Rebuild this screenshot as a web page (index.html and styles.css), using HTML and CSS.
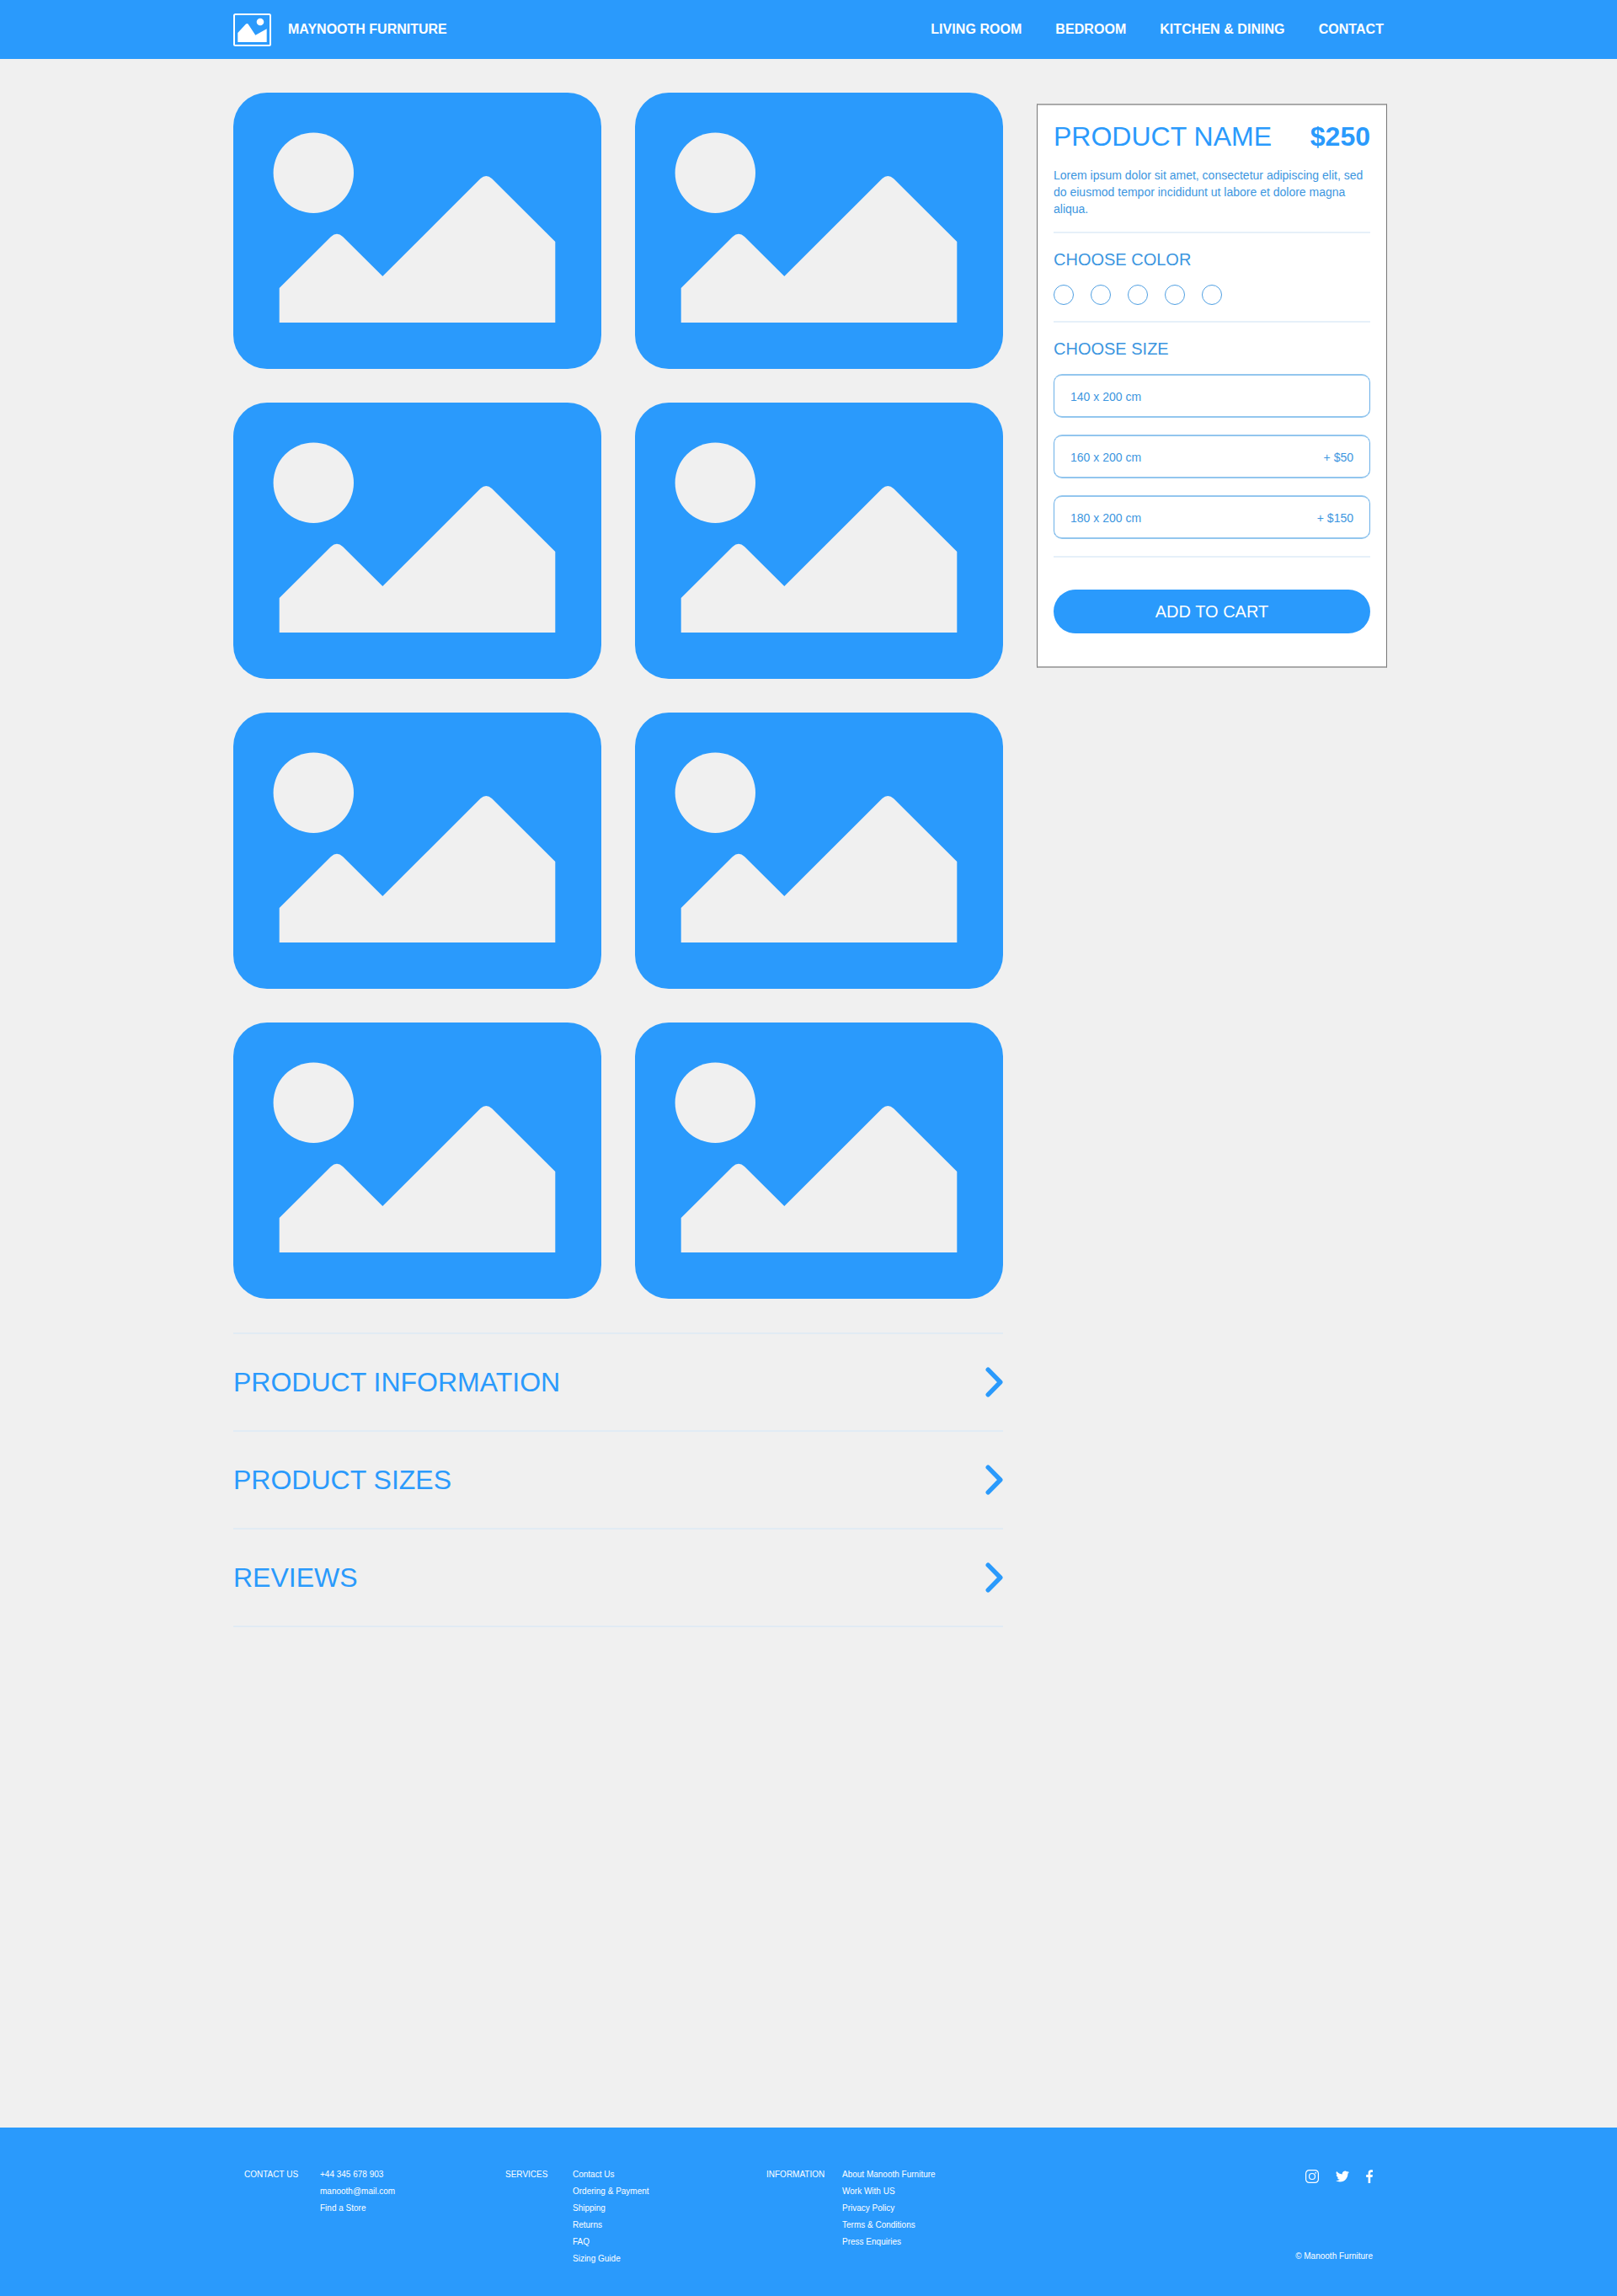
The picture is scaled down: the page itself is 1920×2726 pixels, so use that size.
FILE: index.html
```html
<!DOCTYPE html>
<html lang="en">
<head>
  <meta charset="UTF-8" />
  <title>Maynooth Furniture</title>
  <link rel="stylesheet" href="styles.css">
</head>
<body>

<svg class="sprites" width="0" height="0">
  <symbol id="placeholder" viewBox="0 0 437 328">
    <circle cx="95.3" cy="95.3" r="47.7" />
    <path d="M54.7 232 L116 171 Q123 164.500 130 171 L177.3 218 L293.500 102 Q300.3 96 307 102 L382.3 177 V273 H54.7 Z" />
  </symbol>
  <symbol id="chevron" viewBox="0 0 21 36">
    <path d="M3.2 3.2 L17.8 18 L3.2 32.800" fill="none" stroke="currentColor" stroke-width="5.400" stroke-linecap="round" stroke-linejoin="round" />
  </symbol>
</svg>

<!-- Top bar -->
<header class="topbar">
  <div class="topbar-inner">
    <a class="brand" href="#">
      <svg class="brand-logo" viewBox="0 0 45 39">
        <rect x="1" y="1" width="43" height="37" rx="1.5" fill="none" stroke="#fff" stroke-width="2" />
        <circle cx="32" cy="10" r="4.3" fill="#fff" />
        <path d="M5.3 23 L15 12.600 Q16.3 11.300 17.600 12.600 L26.3 25.700 L39.700 18.300 V34 H5.300 Z" fill="#fff" />
      </svg>
      <span>MAYNOOTH FURNITURE</span>
    </a>
    <nav class="main-nav">
      <a href="#">LIVING ROOM</a>
      <a href="#">BEDROOM</a>
      <a href="#">KITCHEN &amp; DINING</a>
      <a href="#">CONTACT</a>
    </nav>
  </div>
</header>

<main class="product-page">
  <div class="product-left">
    <!-- Gallery -->
    <div class="gallery">
      <div class="gallery-item"><svg><use href="#placeholder" /></svg></div>
      <div class="gallery-item"><svg><use href="#placeholder" /></svg></div>
      <div class="gallery-item"><svg><use href="#placeholder" /></svg></div>
      <div class="gallery-item"><svg><use href="#placeholder" /></svg></div>
      <div class="gallery-item"><svg><use href="#placeholder" /></svg></div>
      <div class="gallery-item"><svg><use href="#placeholder" /></svg></div>
      <div class="gallery-item"><svg><use href="#placeholder" /></svg></div>
      <div class="gallery-item"><svg><use href="#placeholder" /></svg></div>
    </div>

    <!-- Accordion -->
    <div class="details">
      <div class="details-row">
        <span>PRODUCT INFORMATION</span>
        <svg class="chevron"><use href="#chevron" /></svg>
      </div>
      <div class="details-row">
        <span>PRODUCT SIZES</span>
        <svg class="chevron"><use href="#chevron" /></svg>
      </div>
      <div class="details-row">
        <span>REVIEWS</span>
        <svg class="chevron"><use href="#chevron" /></svg>
      </div>
    </div>
  </div>

  <!-- Purchase panel -->
  <aside class="buy-panel">
    <div class="buy-head">
      <h1>PRODUCT NAME</h1>
      <div class="price">$250</div>
    </div>
    <p class="buy-text">Lorem ipsum dolor sit amet, consectetur adipiscing elit, sed do eiusmod tempor incididunt ut labore et dolore magna aliqua.</p>

    <div class="buy-section">
      <h2>CHOOSE COLOR</h2>
      <div class="swatches">
        <span class="swatch"></span>
        <span class="swatch"></span>
        <span class="swatch"></span>
        <span class="swatch"></span>
        <span class="swatch"></span>
      </div>
    </div>

    <div class="buy-section">
      <h2>CHOOSE SIZE</h2>
      <div class="size-list">
        <div class="size-option"><span>140 x 200 cm</span></div>
        <div class="size-option"><span>160 x 200 cm</span><span>+ $50</span></div>
        <div class="size-option"><span>180 x 200 cm</span><span>+ $150</span></div>
      </div>
    </div>

    <div class="buy-actions">
      <button class="add-to-cart">ADD TO CART</button>
    </div>
  </aside>
</main>

<footer class="footer">
  <div class="footer-inner">
    <div class="footer-col contact-col">
      <div class="footer-title">CONTACT US</div>
      <ul>
        <li>+44 345 678 903</li>
        <li>manooth@mail.com</li>
        <li>Find a Store</li>
      </ul>
    </div>
    <div class="footer-col services-col">
      <div class="footer-title">SERVICES</div>
      <ul>
        <li>Contact Us</li>
        <li>Ordering &amp; Payment</li>
        <li>Shipping</li>
        <li>Returns</li>
        <li>FAQ</li>
        <li>Sizing Guide</li>
      </ul>
    </div>
    <div class="footer-col info-col">
      <div class="footer-title">INFORMATION</div>
      <ul>
        <li>About Manooth Furniture</li>
        <li>Work With US</li>
        <li>Privacy Policy</li>
        <li>Terms &amp; Conditions</li>
        <li>Press Enquiries</li>
      </ul>
    </div>
    <div class="footer-side">
      <div class="social">
        <svg class="social-insta" viewBox="0 0 16 16">
          <rect x="0.6" y="0.6" width="14.8" height="14.8" rx="4" fill="none" stroke="#fff" stroke-width="1.2" />
          <circle cx="8" cy="8" r="3.5" fill="none" stroke="#fff" stroke-width="1.2" />
          <circle cx="12.2" cy="3.8" r="0.9" fill="#fff" />
        </svg>
        <svg class="social-twitter" viewBox="0 0 24 24">
          <path fill="#fff" d="M23.95 4.57a10 10 0 0 1-2.83.78 4.96 4.96 0 0 0 2.17-2.72 9.9 9.9 0 0 1-3.13 1.19 4.92 4.92 0 0 0-8.39 4.48C7.69 8.1 4.07 6.13 1.64 3.16a4.93 4.93 0 0 0 1.52 6.57 4.9 4.9 0 0 1-2.23-.62v.06a4.92 4.92 0 0 0 3.95 4.83 5 5 0 0 1-2.21.08 4.94 4.94 0 0 0 4.6 3.42A9.87 9.87 0 0 1 0 19.54a13.94 13.94 0 0 0 7.55 2.21c9.05 0 14-7.5 14-13.98q0-.32-.02-.63a9.94 9.94 0 0 0 2.46-2.55z" />
        </svg>
        <svg class="social-facebook" viewBox="0 0 8 16">
          <path fill="#fff" d="M5.2 16V8.9h2.3l.4-2.8H5.2V4.4c0-.8.2-1.4 1.4-1.4H8V.5C7.7.4 6.9.3 6 .3 4 .3 2.6 1.5 2.6 3.9v2.2H.2v2.8h2.4V16z" />
        </svg>
      </div>
      <div class="copyright">© Manooth Furniture</div>
    </div>
  </div>
</footer>

</body>
</html>
```

FILE: styles.css
```css
* {
  box-sizing: border-box;
}

body {
  font-family: "Liberation Sans", Arial, sans-serif;
  background: #f0f0f0;
  margin: 0;
  color: #2a9afc;
  display: flex;
  flex-direction: column;
  min-height: 2726px;
}

a {
  color: inherit;
  text-decoration: none;
}

.sprites {
  display: block;
  height: 0;
}

/* Top bar */
.topbar {
  background: #2a9afc;
  height: 70px;
  color: #fff;
}

.topbar-inner {
  width: 1366px;
  height: 100%;
  margin: 0 auto;
  display: flex;
  justify-content: space-between;
  align-items: center;
}

.brand {
  display: flex;
  align-items: center;
  gap: 20px;
  font-size: 16px;
  font-weight: bold;
}

.brand-logo {
  width: 45px;
  height: 39px;
  display: block;
}

.main-nav {
  display: flex;
  gap: 40px;
  font-size: 16px;
  font-weight: bold;
  letter-spacing: 0.05px;
}

/* Main layout */
.product-page {
  width: 1366px;
  margin: 0 auto;
  padding: 40px 0 0;
  display: grid;
  grid-template-columns: 914px 416px;
  gap: 40px;
  align-items: start;
  flex: 1;
}

.gallery {
  display: grid;
  grid-template-columns: 437px 437px;
  gap: 40px;
}

.gallery-item {
  height: 328px;
  background: #2a9afc;
  border-radius: 40px;
  fill: #f0f0f0;
}

.gallery-item svg {
  display: block;
  width: 100%;
  height: 100%;
}

/* Accordion */
.details {
  margin-top: 40px;
  border-top: 2px solid #e1ebf4;
}

.details-row {
  height: 116px;
  border-bottom: 2px solid #e1ebf4;
  display: flex;
  justify-content: space-between;
  align-items: center;
  font-size: 32px;
}

.chevron {
  width: 21px;
  height: 36px;
  display: block;
}

/* Purchase panel */
.buy-panel {
  margin-top: 13px;
  height: 670px;
  background: #fff;
  border: 1px solid #777;
  border-top: 2px solid #aaa;
  border-bottom: 2px solid #aaa;
  padding: 17px 19px 0;
}

.buy-head {
  display: flex;
  justify-content: space-between;
  align-items: center;
  height: 41px;
}

.buy-head h1 {
  margin: 0;
  font-size: 32px;
  font-weight: normal;
}

.price {
  font-size: 32px;
  font-weight: bold;
}

.buy-text {
  margin: 15px 0 0;
  font-size: 14px;
  line-height: 20px;
  color: #3c96e0;
  padding-bottom: 17px;
  border-bottom: 2px solid #e6f0f9;
}

.buy-section {
  padding-top: 18px;
}

.buy-section h2 {
  margin: 0;
  font-size: 20px;
  line-height: 26px;
  font-weight: normal;
  color: #3c96e0;
}

.swatches {
  display: flex;
  gap: 20px;
  margin-top: 17px;
  padding-bottom: 19px;
  border-bottom: 2px solid #e6f0f9;
}

.swatch {
  width: 24px;
  height: 24px;
  border: 1px solid #4f9fe2;
  border-radius: 50%;
}

.size-list {
  display: flex;
  flex-direction: column;
  gap: 20px;
  margin-top: 17px;
}

.size-option {
  height: 52px;
  padding: 2px 19px 0 19px;
  border: 1px solid #6cb0e8;
  border-top: 2px solid #93c6ee;
  border-bottom: 2px solid #93c6ee;
  border-radius: 10px;
  display: flex;
  justify-content: space-between;
  align-items: center;
  font-size: 14px;
  color: #3c96e0;
}

.buy-actions {
  margin-top: 20px;
  padding-top: 38px;
  border-top: 2px solid #e6f0f9;
}

.add-to-cart {
  display: block;
  width: 100%;
  height: 52px;
  border: none;
  border-radius: 26px;
  background: #2a9afc;
  color: #fff;
  font-family: inherit;
  font-size: 20px;
}

/* Footer */
.footer {
  background: #2a9afc;
  height: 200px;
  color: #fff;
  font-size: 10px;
}

.footer-inner {
  width: 1366px;
  height: 100%;
  margin: 0 auto;
  padding: 46px 13px 0;
  display: flex;
}

.footer-col {
  display: flex;
}

.footer-col ul {
  list-style: none;
  margin: 0;
  padding: 0;
}

.footer-col li,
.footer-title {
  line-height: 20px;
}

.contact-col {
  width: 310px;
}

.contact-col .footer-title {
  width: 90px;
}

.services-col {
  width: 310px;
}

.services-col .footer-title {
  width: 80px;
}

.info-col .footer-title {
  width: 90px;
}

.footer-side {
  margin-left: auto;
  height: 112px;
  display: flex;
  flex-direction: column;
  justify-content: space-between;
  align-items: flex-end;
}

.social {
  display: flex;
  align-items: center;
  gap: 20px;
  margin-top: 4px;
}

.social svg {
  display: block;
}

.social-insta,
.social-twitter {
  width: 16px;
  height: 16px;
}

.social-facebook {
  width: 8px;
  height: 16px;
}
```
